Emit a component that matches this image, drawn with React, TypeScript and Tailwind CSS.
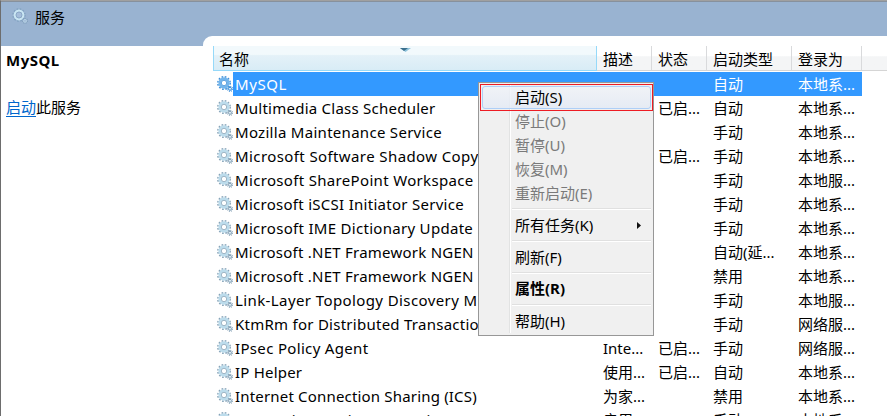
type Service = {
  name: string;
  tracking: string;
  desc?: string;
  running?: boolean;
  startup: string;
  account: string;
};

const LOCAL_SYSTEM = "本地系...";
const LOCAL_SERVICE = "本地服...";
const NETWORK = "网络服...";

const services: Service[] = [
  { name: "MySQL", tracking: "tracking-[0.6px]", startup: "自动", account: LOCAL_SYSTEM },
  { name: "Multimedia Class Scheduler", tracking: "tracking-[0.24px]", running: true, startup: "自动", account: LOCAL_SYSTEM },
  { name: "Mozilla Maintenance Service", tracking: "tracking-[0.29px]", startup: "手动", account: LOCAL_SYSTEM },
  { name: "Microsoft Software Shadow Copy", tracking: "tracking-[0.4px]", running: true, startup: "手动", account: LOCAL_SYSTEM },
  { name: "Microsoft SharePoint Workspace", tracking: "tracking-[0.33px]", startup: "手动", account: LOCAL_SERVICE },
  { name: "Microsoft iSCSI Initiator Service", tracking: "tracking-[0.28px]", startup: "手动", account: LOCAL_SYSTEM },
  { name: "Microsoft IME Dictionary Update", tracking: "tracking-[0.3px]", startup: "手动", account: LOCAL_SYSTEM },
  { name: "Microsoft .NET Framework NGEN", tracking: "tracking-[0.24px]", startup: "自动(延...", account: LOCAL_SYSTEM },
  { name: "Microsoft .NET Framework NGEN", tracking: "tracking-[0.24px]", startup: "禁用", account: LOCAL_SYSTEM },
  { name: "Link-Layer Topology Discovery M", tracking: "tracking-[0.4px]", startup: "手动", account: LOCAL_SERVICE },
  { name: "KtmRm for Distributed Transactio", tracking: "tracking-[0.26px]", startup: "手动", account: NETWORK },
  { name: "IPsec Policy Agent", tracking: "tracking-[0.33px]", desc: "Inte...", running: true, startup: "手动", account: NETWORK },
  { name: "IP Helper", tracking: "tracking-[0.2px]", desc: "使用...", running: true, startup: "自动", account: LOCAL_SYSTEM },
  { name: "Internet Connection Sharing (ICS)", tracking: "tracking-[0.18px]", desc: "为家...", startup: "禁用", account: LOCAL_SYSTEM },
  { name: "Interactive Services Detection", tracking: "tracking-[0.2px]", desc: "启用...", startup: "手动", account: LOCAL_SYSTEM },
];

function Gears({ active = false }: { active?: boolean }) {
  const edge = active ? "#3c8ed8" : "#86a3b8";
  const body = active ? "#72b5ec" : "#bcdcec";
  return (
    <svg className="block h-4 w-4 shrink-0" viewBox="0 0 16 16" fill="none">
      <circle cx="7" cy="7" r="6.2" stroke={edge} strokeWidth="1.5" strokeDasharray="1.7 1.546" />
      <circle cx="7" cy="7" r="4.2" stroke={body} strokeWidth="2.9" />
      <circle cx="7" cy="7" r="2.7" fill="#fff" stroke={edge} strokeWidth="0.8" />
      <circle cx="13" cy="12.8" r="2.5" stroke={edge} strokeWidth="1.2" strokeDasharray="1 0.96" />
      <circle cx="13" cy="12.8" r="1.5" fill="#e4f2fb" stroke={edge} strokeWidth="1" />
    </svg>
  );
}

function TitleGears() {
  return (
    <svg className="block h-4 w-4 shrink-0" viewBox="0 0 16 16" fill="none">
      <circle cx="7" cy="7" r="6" stroke="#7fa0bf" strokeWidth="1.4" strokeDasharray="1.6 1.54" />
      <circle cx="7" cy="7" r="4.3" stroke="#c9e6f3" strokeWidth="2.2" />
      <circle cx="7" cy="7" r="3" fill="#a5bedb" stroke="#7f9fbe" strokeWidth="0.7" />
      <circle cx="13" cy="12.8" r="2.4" stroke="#7d9bb8" strokeWidth="1.2" strokeDasharray="1 0.96" />
      <circle cx="13" cy="12.8" r="1.5" fill="#a5bedb" stroke="#b4d0e2" strokeWidth="1" />
    </svg>
  );
}

function Row({ service, selected }: { service: Service; selected: boolean }) {
  return (
    <div className="flex h-6 shrink-0 items-center pl-1">
      <Gears active={selected} />
      <div className={`flex h-6 w-[629px] items-center leading-6 ${selected ? "bg-[#3399ff] text-white" : ""}`}>
        <span className={`w-[370px] pl-0.5 ${service.tracking}`}>{service.name}</span>
        <span className="w-[55px]">{service.desc}</span>
        <span className="w-[55px]">{service.running ? "已启..." : ""}</span>
        <span className="w-[85px]">{service.startup}</span>
        <span>{service.account}</span>
      </div>
    </div>
  );
}

function HeaderCell({ label, width }: { label: string; width: string }) {
  return (
    <div className={`flex h-full items-center border-r border-[#d9dadc] pl-1.5 pt-0.5 ${width}`}>{label}</div>
  );
}

function Header() {
  return (
    <div className="flex h-[25px] shrink-0 border-b border-[#d5d5d5] bg-linear-to-b from-white from-40% to-[#f4f5f6] to-45%">
      <div className="relative flex h-[25px] w-[384px] items-center border-x border-b border-[#96d9f9] bg-linear-to-b from-[#f2f9fc] from-35% via-[#e4f1f8] via-40% to-[#d8ecf6] pl-[5px] pt-0.5">
        名称
        <svg className="absolute left-[186px] top-[2px] h-1 w-[11px]" viewBox="0 0 11 4">
          <path d="M0 0h11L5.5 4z" fill="#8fc4dc" />
          <path d="M0 0h8L4 3z" fill="#3b6f8d" />
        </svg>
      </div>
      <HeaderCell label="描述" width="w-[55px]" />
      <HeaderCell label="状态" width="w-[55px]" />
      <HeaderCell label="启动类型" width="w-[85px]" />
      <HeaderCell label="登录为" width="w-[70px]" />
    </div>
  );
}

function Item({ label, disabled, bold, arrow }: { label: string; disabled?: boolean; bold?: boolean; arrow?: boolean }) {
  return (
    <div className={`flex h-6 items-center pl-[35px] pr-[11px] ${disabled ? "text-[#7a7a7a]" : ""} ${bold ? "pb-0.5 font-bold" : ""}`}>
      <span>{label}</span>
      {arrow && (
        <svg className="ml-auto h-[7px] w-1" viewBox="0 0 4 7">
          <path d="M0 0l4 3.5L0 7z" fill="#111" />
        </svg>
      )}
    </div>
  );
}

function Separator() {
  return (
    <div className="flex h-2 items-center pl-[32px] pr-px">
      <div className="h-0.5 w-full border-b border-white bg-[#e0e0e0]" />
    </div>
  );
}

function ContextMenu() {
  return (
    <div className="absolute left-[478px] top-[82px] h-[254px] w-[176px] border border-[#979797] bg-[#f0f0f0] text-black">
      <div className="absolute bottom-[2px] left-[30px] top-[2px] w-0.5 border-l border-r border-l-[#e2e3e3] border-r-white" />
      <div className="relative px-px pt-[2px]">
        <div className="absolute left-[1px] top-[1px] h-[27px] w-[173px] border border-[#ed1c24] p-px">
          <div className="h-full w-full rounded-[3px] border border-[#aecff7] bg-linear-to-b from-[#f0f3f8]/80 to-[#e3eaf5]/80" />
        </div>
        <div className="relative">
          <Item label="启动(S)" />
          <Item label="停止(O)" disabled />
          <Item label="暂停(U)" disabled />
          <Item label="恢复(M)" disabled />
          <Item label="重新启动(E)" disabled />
          <Separator />
          <Item label="所有任务(K)" arrow />
          <Separator />
          <Item label="刷新(F)" />
          <Separator />
          <Item label="属性(R)" bold />
          <Separator />
          <Item label="帮助(H)" />
        </div>
      </div>
    </div>
  );
}

export default function App() {
  return (
    <div className="relative flex h-[416px] w-[887px] flex-col overflow-hidden whitespace-nowrap border-l border-t border-l-[#6d6d6d] border-t-[#a0a0a0] bg-white font-['Noto_Sans','Noto_Sans_CJK_SC',sans-serif] text-[15px] leading-5 text-black">
      <div className="-mt-px h-[46px] shrink-0 border-t-2 border-[#87919d] bg-[#99b3d1]">
        <div className="flex h-[34px] items-start pl-[11px] pt-[5px]">
          <div className="pt-px"><TitleGears /></div>
          <span className="pl-[7px]">服务</span>
        </div>
        <div className="ml-[202px] h-[10px] rounded-tl-[9px] bg-white" />
      </div>
      <div className="flex min-h-0 flex-1">
        <aside className="w-[212px] shrink-0 pl-[5px] pt-[4px]">
          <div className="font-bold tracking-[0.5px]">MySQL</div>
          <div className="pt-[27px]">
            <span className="inline-block h-[20px] border-b border-[#0066cc] text-[#0066cc]">启动</span>此服务
          </div>
        </aside>
        <main className="flex min-w-0 flex-1 flex-col">
          <Header />
          <div className="flex flex-col pt-px">
            {services.map((s, i) => (
              <Row key={i} service={s} selected={i === 0} />
            ))}
          </div>
        </main>
      </div>
      <div className="absolute inset-0 -ml-px -mt-px">
        <ContextMenu />
      </div>
    </div>
  );
}
